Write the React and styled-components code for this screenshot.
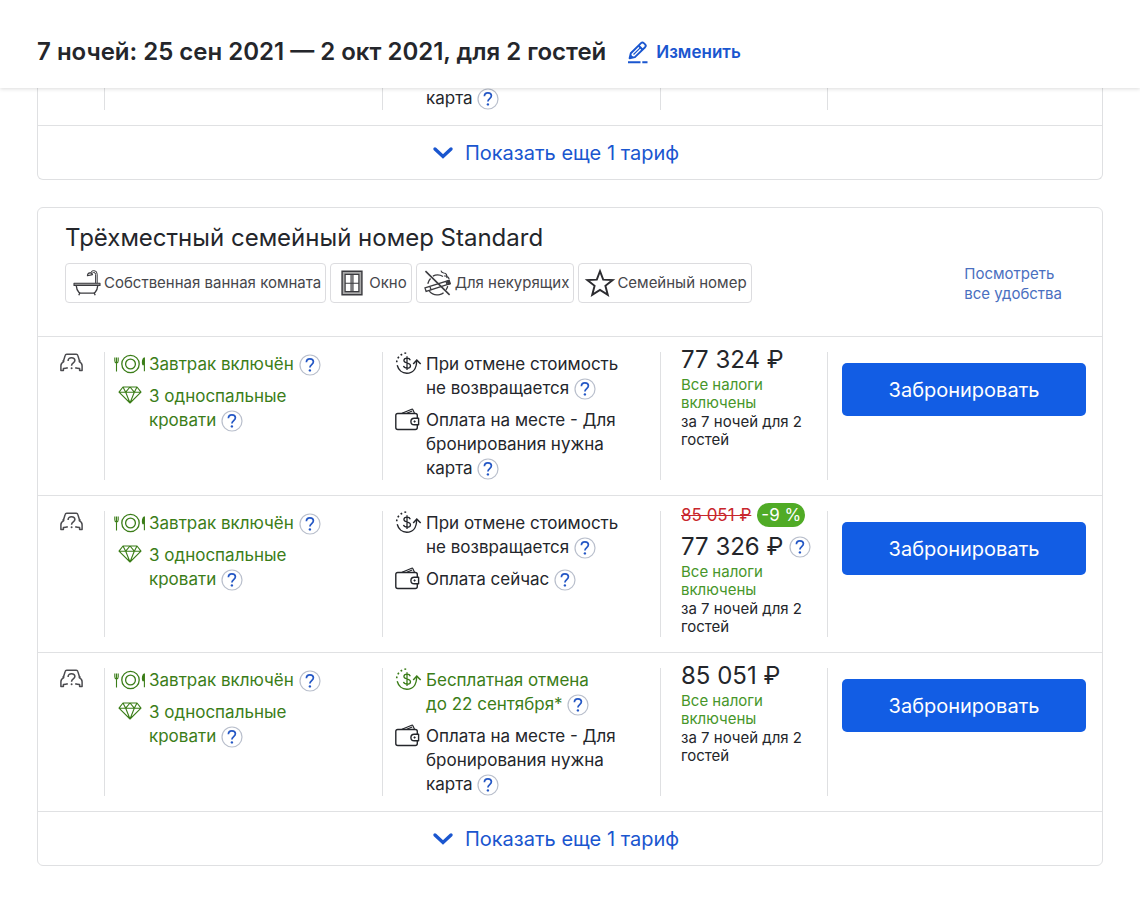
import React from "react";
import styled, { createGlobalStyle } from "styled-components";

const included = [
  { icon: "meal", text: "Завтрак включён", green: true },
  { icon: "diamond", text: "3 односпальные\nкровати", green: true },
];

const noRefund = {
  icon: "refund",
  text: "При отмене стоимость\nне возвращается",
};

const freeCancel = {
  icon: "refund",
  text: "Бесплатная отмена\nдо 22 сентября*",
  green: true,
};

const payOnSite = {
  icon: "wallet",
  text: "Оплата на месте - Для\nбронирования нужна\nкарта",
};

const payNow = { icon: "wallet", text: "Оплата сейчас" };

const rates = [
  { id: 1, price: "77 324 ₽", terms: [noRefund, payOnSite] },
  {
    id: 2,
    price: "77 326 ₽",
    oldPrice: "85 051 ₽",
    discount: "-9 %",
    terms: [noRefund, payNow],
  },
  { id: 3, price: "85 051 ₽", terms: [freeCancel, payOnSite] },
];

const amenities = [
  { icon: "bath", label: "Собственная ванная комната" },
  { icon: "window", label: "Окно" },
  { icon: "noSmoking", label: "Для некурящих" },
  { icon: "star", label: "Семейный номер" },
];

function App() {
  return (
    <>
      <GlobalStyle />
      <TopBar>
        <Dates>7 ночей: 25 сен 2021 — 2 окт 2021, для 2 гостей</Dates>
        <EditButton type="button">
          <PencilIcon />
          Изменить
        </EditButton>
      </TopBar>
      <Rooms>
        <Card $continued>
          <RateRow $continued>
            <Cell />
            <Cell />
            <Cell $pad={12}>
              <Feature item={{ text: "карта" }} />
            </Cell>
            <Cell />
            <Cell />
          </RateRow>
          <ShowMore />
        </Card>
        <Card>
          <CardHeader>
            <div>
              <RoomTitle>Трёхместный семейный номер Standard</RoomTitle>
              <Chips>
                {amenities.map((a) => (
                  <Chip key={a.label}>
                    <ChipIcon>{icons[a.icon]}</ChipIcon>
                    {a.label}
                  </Chip>
                ))}
              </Chips>
            </div>
            <AllAmenities href="#amenities">
              Посмотреть
              <br />
              все удобства
            </AllAmenities>
          </CardHeader>
          {rates.map((rate) => (
            <Rate key={rate.id} rate={rate} />
          ))}
          <ShowMore />
        </Card>
      </Rooms>
    </>
  );
}

export default App;

function Rate({ rate }) {
  return (
    <RateRow>
      <Cell $pad={22}>
        <CarIcon />
      </Cell>
      <Cell $pad={9}>
        {included.map((item) => (
          <Feature key={item.text} item={item} wide />
        ))}
      </Cell>
      <Cell $pad={12}>
        {rate.terms.map((item) => (
          <Feature key={item.text} item={item} />
        ))}
      </Cell>
      <Cell $pad={20}>
        <PriceBox>
          {rate.oldPrice && (
            <Discount>
              <OldPrice>{rate.oldPrice}</OldPrice>
              <Percent>{rate.discount}</Percent>
            </Discount>
          )}
          <Price>
            {rate.price}
            {rate.oldPrice && <Help />}
          </Price>
          <Taxes>Все налоги включены</Taxes>
          <Period>за 7 ночей для 2 гостей</Period>
        </PriceBox>
      </Cell>
      <Cell $pad={14}>
        <BookButton type="button">Забронировать</BookButton>
      </Cell>
    </RateRow>
  );
}

function Feature({ item, wide }) {
  return (
    <FeatureRow $green={item.green}>
      <FeatureIcon $wide={wide}>{icons[item.icon]}</FeatureIcon>
      <FeatureText>
        {item.text} <Help />
      </FeatureText>
    </FeatureRow>
  );
}

function Help() {
  return (
    <HelpButton type="button" aria-label="Подробнее">
      <svg width="22" height="22" viewBox="0 0 22 22" fill="none">
        <circle cx="11" cy="11" r="10" stroke="#b9bfcc" strokeWidth="1.2" />
        <path
          d="M7.4 8.3c0-2.2 1.4-3.5 3.5-3.5s3.5 1.2 3.5 3c0 2.7-3.5 2.9-3.5 5.8"
          stroke="#2457c5"
          strokeWidth="1.7"
        />
        <circle cx="10.9" cy="16.4" r="1.2" fill="#2457c5" />
      </svg>
    </HelpButton>
  );
}

function ShowMore() {
  return (
    <MoreButton type="button">
      <svg width="20" height="12" viewBox="0 0 20 12" fill="none">
        <path
          d="M2 2l8 7.5L18 2"
          stroke="#1a56cf"
          strokeWidth="3.4"
          strokeLinecap="round"
        />
      </svg>
      Показать еще 1 тариф
    </MoreButton>
  );
}

function PencilIcon() {
  return (
    <svg width="20" height="23" viewBox="0 0 20 23" fill="none">
      <path
        d="M1.6 17.2l1.2-5L13 2.1a2 2 0 0 1 2.8 0l1.3 1.3a2 2 0 0 1 0 2.8L6.9 16.1z"
        stroke="#1a56cf"
        strokeWidth="1.9"
        strokeLinejoin="round"
      />
      <path d="M1.4 17.6l1-4.4 3.6 3.4zM11.2 3.8l4.2 4.2-1.5 1.4-4.1-4.2z" fill="#1a56cf" />
      <path d="M5.5 13.5l6.5-6.4" stroke="#1a56cf" strokeWidth="1.2" />
      <path d="M0 21.3h12.5M14.3 21.3H19.5" stroke="#1a56cf" strokeWidth="2" />
    </svg>
  );
}

function CarIcon() {
  return (
    <CarSvg width="23" height="20" viewBox="0 0 23 20" fill="none">
      <path
        d="M4.4 8.4L2.3 8M3.4 8.2L5.2 2.4Q5.5 1.3 6.7 1.3h9.6q1.2 0 1.5 1.1l1.8 5.8M18.6 8.4l2.1-.4M3.8 8.6C1.7 9.6.9 10.8.9 12.8v4.6h2.5v-1.9q2.4 0 4.4-.7M19.2 8.6c2.1 1 2.9 2.2 2.9 4.2v4.6h-2.5v-1.9q-2.4 0-4.4-.7"
        stroke="#4b4b4f"
        strokeWidth="1.5"
        strokeLinejoin="round"
      />
      <path
        d="M8.1 7.9c0-2 1.4-3.2 3.4-3.2s3.4 1.1 3.4 2.8c0 2.3-3.3 2.4-3.3 4.8v.5"
        stroke="#4b4b4f"
        strokeWidth="1.5"
      />
      <circle cx="11.6" cy="15.3" r="1" fill="#4b4b4f" />
    </CarSvg>
  );
}

const icons = {
  meal: (
    <svg width="32" height="22" viewBox="0 -2 32 22" fill="none" stroke="currentColor">
      <circle cx="16.5" cy="10" r="8.7" strokeWidth="1.3" />
      <circle cx="16.5" cy="10" r="4.9" strokeWidth="1.3" />
      <path d="M.8 3.5v3.2Q.8 8.8 2.5 9 4.2 8.8 4.2 6.7V3.5M2.5 3.5v14" strokeWidth="1.1" />
      <path d="M30.4 3.5v13.8M30.4 3.8C28.3 5 28 8.5 28.8 10.6h1.6" fill="currentColor" strokeWidth="1.1" />
    </svg>
  ),
  diamond: (
    <svg width="24" height="20" viewBox="0 -2 24 20" fill="none" stroke="currentColor" strokeWidth="1.1" strokeLinejoin="round">
      <path d="M5 1h14l4 5.2L12 17 1 6.2zM1 6.2h22M5 1l2.7 5.2L12 17l4.3-10.8L19 1M7.7 6.2L12 1l4.3 5.2" />
    </svg>
  ),
  refund: (
    <svg width="28" height="24" viewBox="0 0 28 24" fill="none" stroke="currentColor">
      <path d="M2.2 13.3c1.2 4.6 5 8 9.6 8 6 0 9.8-4.5 9.8-12.3" strokeWidth="1.4" />
      <path d="M18.2 12l3.6-3.9 3.9 3.9" strokeWidth="1.5" />
      <path d="M1.7 10.3C2 5.3 6.2 1.2 11.8 1" strokeWidth="1.6" strokeDasharray="1.8 2.4" />
      <path d="M15.3 8.2c-.4-1.3-1.6-2-3.3-2-1.8 0-3.1.9-3.1 2.4 0 3.5 6.6 1.5 6.6 5.1 0 1.6-1.4 2.5-3.4 2.5-1.9 0-3.2-.8-3.6-2.3M12 4.3v13.8" strokeWidth="1.3" />
    </svg>
  ),
  wallet: (
    <svg width="26" height="24" viewBox="0 0 26 24" fill="none" stroke="currentColor" strokeWidth="1.4" strokeLinejoin="round">
      <path d="M22.3 10V7.5q0-2-2-2H2.8q-2 0-2 2v12q0 2 2 2h17.5q2 0 2-2v-2.6" />
      <path d="M7 5.2l9.7-4q.8-.3 1.1.4l1.7 3.6M11.8 5.2l5.4-2.2" strokeWidth="1.2" />
      <path d="M23.6 10.2h-4.4a3.3 3.3 0 0 0 0 6.6h4.4z" />
      <circle cx="19.6" cy="13.5" r=".8" fill="currentColor" strokeWidth=".6" />
    </svg>
  ),
  bath: (
    <svg width="28" height="28" viewBox="0 0 28 28" fill="none" stroke="#3b3b3f" strokeWidth="1.3" strokeLinejoin="round">
      <path d="M1 14.2h26v2.2H1z" fill="#aaa" strokeWidth="1.1" />
      <path d="M3.2 16.4q.4 4.6 2.6 6.9.8.9 2 .9h12.4q1.2 0 2-.9 2.2-2.3 2.6-6.9M6.8 24l-1 2.2M21.2 24l1 2.2" />
      <path d="M24.2 14V5.2q0-3.6-3.5-3.6-2.4 0-3 2.4M22.6 14V5.6q0-2.2-1.9-2.2-1.2 0-1.7 1.2" strokeWidth="1" />
      <path d="M14.4 6.8q.2-2.6 2.4-2.9 2.1-.1 2.7 1.7z" strokeWidth="1.1" />
    </svg>
  ),
  window: (
    <svg width="22" height="26" viewBox="0 0 24 28" fill="none" stroke="#3b3b3f">
      <path d="M3 3h18v22H3z" stroke="#aaa" strokeWidth="3" />
      <path d="M1.2 1.2h21.6v25.6H1.2z" strokeWidth="1.6" />
      <path d="M4.5 4.5h15v19h-15zM11 4.5v19M13 4.5v19M4.5 14.3h15" strokeWidth="1.3" />
    </svg>
  ),
  noSmoking: (
    <svg width="28" height="26" viewBox="0 0 30 28" fill="none" stroke="#3b3b3f" strokeWidth="1.4">
      <path d="M1.5 1.2l26 25.6" strokeWidth="1.7" />
      <path d="M1 19.2l26-8 1.2 3.5-26 8.3zM6.3 17.7l1.2 3.5M23.7 12.3l1.2 3.5" />
      <path d="M25 12l1 3.4 1.7-.6-1-3.3z" fill="#3b3b3f" />
      <path d="M9.5 6.6Q15 3.8 20.4 7M4 14.8q.8-3.4 3-5.6M5.6 22.8Q10 28 16.8 26.4 19.5 25.8 21 24.5M23.6 21.5q1.5-2 1.8-4.2" />
      <path d="M18.2.6q.5 2.3 3 2.6 4 .2 3.3 5.5M21.5 6.5q4.6-.7 5.5 3.2" strokeWidth="1.2" />
    </svg>
  ),
  star: (
    <svg width="28" height="28" viewBox="0 0 28 28" fill="none" stroke="#2b2b2f" strokeWidth="1.9">
      <path d="M14 2.2l3.2 8.4 9.5.4-7.3 5.8 2.4 9.1-7.8-5-7.8 5 2.4-9.1L1.300 11l9.5-.4z" />
    </svg>
  ),
};

const GlobalStyle = createGlobalStyle`
  body {
    margin: 0;
    background: #fff;
    color: #24262b;
    font-family: Inter, "Liberation Sans", sans-serif;
  }

  * {
    box-sizing: border-box;
  }

  button {
    padding: 0;
    border: 0;
    background: none;
    font-family: inherit;
    cursor: pointer;
  }

  svg {
    display: block;
    overflow: visible;
    flex-shrink: 0;
  }
`;

const TopBar = styled.header`
  position: sticky;
  top: 0;
  z-index: 1;
  display: flex;
  align-items: center;
  gap: 22px;
  height: 88px;
  padding: 16px 37px 0;
  background: #fff;
  box-shadow: 0 1px 4px rgba(0, 0, 0, 0.14);
`;

const Dates = styled.h1`
  margin: 0;
  font-size: 24px;
  line-height: 32px;
  font-weight: 600;
`;

const EditButton = styled.button`
  display: flex;
  align-items: center;
  gap: 8px;
  color: #1a56cf;
  font-size: 17px;
  line-height: 24px;
  font-weight: 600;
`;

const Rooms = styled.main`
  display: flex;
  flex-direction: column;
  gap: 27px;
  margin-top: -2px;
  padding: 0 37px 58px;
`;

const Card = styled.section`
  border: 1px solid #dfe0e2;
  border-top-width: ${(p) => (p.$continued ? "0" : "1px")};
  border-radius: ${(p) => (p.$continued ? "0 0 6px 6px" : "6px")};
`;

const CardHeader = styled.div`
  display: flex;
  justify-content: space-between;
  padding: 14px 40px 32px 27px;
`;

const RoomTitle = styled.h2`
  margin: 0 0 9px;
  font-size: 24px;
  line-height: 32px;
  font-weight: 400;
`;

const Chips = styled.ul`
  display: flex;
  gap: 4px;
  margin: 0;
  padding: 0;
  list-style: none;
`;

const Chip = styled.li`
  display: flex;
  align-items: center;
  gap: 2px;
  height: 40px;
  padding: 0 4px 0 6px;
  border: 1px solid #dcdcdf;
  border-radius: 4px;
  color: #46464b;
  font-size: 15px;
  line-height: 20px;
  white-space: nowrap;
`;

const ChipIcon = styled.span`
  display: flex;
  justify-content: center;
  width: 30px;
`;

const AllAmenities = styled.a`
  margin-top: 42px;
  color: #4a6fc0;
  font-size: 15px;
  line-height: 20px;
  text-decoration: none;
  white-space: nowrap;
`;

const RateRow = styled.div`
  display: grid;
  grid-template-columns: 66fr 278fr 278fr 167fr 275fr;
  padding: ${(p) => (p.$continued ? "0 0 15px" : "15px 0")};
  border-top: ${(p) => (p.$continued ? "0" : "1px solid #e0e1e3")};
`;

const Cell = styled.div`
  min-width: 0;
  padding-left: ${(p) => p.$pad || 0}px;

  & + & {
    border-left: 1px solid #dfe0e2;
  }
`;

const CarSvg = styled.svg`
  margin-top: 1px;
`;

const FeatureRow = styled.div`
  display: flex;
  color: ${(p) => (p.$green ? "#3b7d18" : "inherit")};

  & + & {
    margin-top: 8px;
  }
`;

const FeatureIcon = styled.span`
  display: flex;
  flex-shrink: 0;
  align-items: flex-start;
  justify-content: ${(p) => (p.$wide ? "center" : "flex-start")};
  width: ${(p) => (p.$wide ? "32px" : "28px")};
  margin-right: 3px;
`;

const FeatureText = styled.span`
  font-size: 17px;
  line-height: 24px;
  white-space: pre-line;
`;

const HelpButton = styled.button`
  display: inline-block;
  height: 22px;
  vertical-align: top;
  margin-top: 2px;
`;

const PriceBox = styled.div`
  margin-top: -8px;
  padding-bottom: 1px;
`;

const Discount = styled.div`
  display: flex;
  align-items: center;
  gap: 6px;
  height: 24px;
  margin-bottom: 4px;
  font-size: 17px;
  white-space: nowrap;
`;

const OldPrice = styled.s`
  color: #c8262c;
`;

const Percent = styled.span`
  padding: 0 4px;
  border-radius: 12px;
  background: #50ab26;
  color: #fff;
  font-size: 17px;
  line-height: 24px;
`;

const Price = styled.div`
  display: flex;
  align-items: center;
  gap: 6px;
  font-size: 24px;
  line-height: 32px;
  white-space: nowrap;

  ${HelpButton} {
    margin-top: 0;
  }
`;

const Taxes = styled.div`
  margin-bottom: 1px;
  padding-right: 40px;
  color: #47962a;
  font-size: 15px;
  line-height: 18px;
`;

const Period = styled.div`
  padding-right: 24px;
  font-size: 15px;
  line-height: 18px;
`;

const BookButton = styled.button`
  display: block;
  width: calc(100% - 16px);
  height: 53px;
  margin-top: 11px;
  border-radius: 5px;
  background: #125de4;
  color: #fff;
  font-size: 20px;
`;

const MoreButton = styled.button`
  display: flex;
  align-items: center;
  justify-content: center;
  gap: 12px;
  width: 100%;
  height: 54px;
  padding-right: 28px;
  border-top: 1px solid #e0e1e3;
  color: #1a56cf;
  font-size: 20px;
  line-height: 24px;
`;
